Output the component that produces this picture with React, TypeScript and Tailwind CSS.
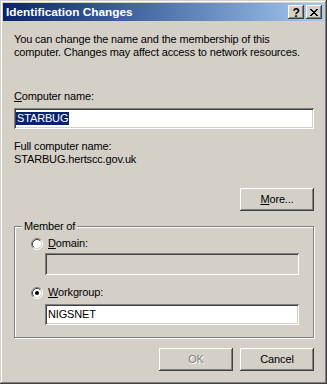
import React from 'react';

const raised =
  'shadow-[inset_-1px_-1px_#404040,inset_1px_1px_#ffffff,inset_-2px_-2px_#808080,inset_2px_2px_#d4d0c8]';
const sunken =
  'shadow-[inset_1px_1px_#808080,inset_-1px_-1px_#ffffff,inset_2px_2px_#404040,inset_-2px_-2px_#d4d0c8]';

const Radio: React.FC<{ checked?: boolean }> = ({ checked }) => (
  <svg width="12" height="12" viewBox="0 0 12 12" className="shrink-0">
    <circle cx="6" cy="6" r="4.5" fill="#ffffff" />
    <path d="M2.11 9.89A5.5 5.5 0 0 1 9.89 2.11" fill="none" stroke="#808080" />
    <path d="M9.89 2.11A5.5 5.5 0 0 1 2.11 9.89" fill="none" stroke="#ffffff" />
    <path d="M2.82 9.18A4.5 4.5 0 0 1 9.18 2.82" fill="none" stroke="#404040" />
    <path d="M9.18 2.82A4.5 4.5 0 0 1 2.82 9.18" fill="none" stroke="#d4d0c8" />
    {checked && <circle cx="6" cy="6" r="2" fill="#000000" />}
  </svg>
);

const Button: React.FC<{ children: React.ReactNode; disabled?: boolean }> = ({ children, disabled }) => (
  <button
    className={`${raised} w-[74px] h-[23px] bg-[#d4d0c8] flex items-center justify-center ${
      disabled ? 'text-[#808080] [text-shadow:1px_1px_#ffffff]' : 'text-black'
    }`}
  >
    {children}
  </button>
);

export default function App() {
  return (
    <div
      className={`w-[327px] h-[384px] bg-[#d4d0c8] p-[3px] flex flex-col text-[11px] leading-[13px] tracking-[-0.15px] text-black shadow-[inset_-1px_-1px_#404040,inset_1px_1px_#d4d0c8,inset_-2px_-2px_#808080,inset_2px_2px_#ffffff] [font-family:'Liberation_Sans',Arial,sans-serif]`}
    >
      {/* caption */}
      <div className="h-[18px] bg-linear-to-r from-[#0a246a] to-[#a6caf0] flex items-center pl-[3px] pr-[2px]">
        <span className="flex-1 text-white font-bold text-[11.8px] tracking-normal">Identification Changes</span>
        <div className="flex gap-[2px]">
          <div className={`${raised} w-[16px] h-[14px] bg-[#d4d0c8] flex items-center justify-center font-bold text-[12px] leading-none pt-[1px]`}>
            ?
          </div>
          <div className={`${raised} w-[16px] h-[14px] bg-[#d4d0c8] flex items-center justify-center`}>
            <svg width="8" height="7" viewBox="0 0 8 7" shapeRendering="crispEdges">
              <path d="M0 0h2v1h-2zM6 0h2v1h-2zM1 1h2v1h-2zM5 1h2v1h-2zM2 2h4v1h-4zM3 3h2v1h-2zM2 4h4v1h-4zM1 5h2v1h-2zM5 5h2v1h-2zM0 6h2v1h-2zM6 6h2v1h-2z" fill="#000" />
            </svg>
          </div>
        </div>
      </div>

      <div className="flex flex-col pl-[11px] pr-[10px] pt-[12px]">
        <p>
          You can change the name and the membership of this
          <br />
          computer. Changes may affect access to network resources.
        </p>

        <div className="mt-[31px]">
          <span className="underline">C</span>omputer name:
        </div>
        <div className={`${sunken} mt-[5px] h-[21px] bg-white flex items-center pl-[2px]`}>
          <span className="bg-[#0a246a] text-white px-[1px]">STARBUG</span>
        </div>

        <div className="mt-[11px]">Full computer name:</div>
        <div>STARBUG.hertscc.gov.uk</div>

        <div className="mt-[22px] flex justify-end">
          <Button>
            <span>
              <span className="underline">M</span>ore...
            </span>
          </Button>
        </div>

        {/* Member of group */}
        <div className="relative mt-[15px] border border-[#808080] shadow-[1px_1px_0_#ffffff,inset_1px_1px_0_#ffffff] pl-[16px] pr-[14px] pt-[10px] pb-[12px] flex flex-col">
          <span className="absolute -top-[7px] left-[7px] bg-[#d4d0c8] px-[2px]">Member of</span>

          <div className="flex items-center gap-[5px]">
            <Radio />
            <span>
              <span className="underline">D</span>omain:
            </span>
          </div>
          <div className={`${sunken} ml-[14px] mt-[3px] h-[22px] bg-[#d4d0c8]`} />

          <div className="flex items-center gap-[5px] mt-[11px]">
            <Radio checked />
            <span>
              <span className="underline">W</span>orkgroup:
            </span>
          </div>
          <div className={`${sunken} ml-[14px] mt-[5px] h-[21px] bg-white flex items-center pl-[3px]`}>
            NIGSNET
          </div>
        </div>

        <div className="mt-[10px] flex justify-end gap-[7px]">
          <Button disabled>OK</Button>
          <Button>Cancel</Button>
        </div>
      </div>
    </div>
  );
}
